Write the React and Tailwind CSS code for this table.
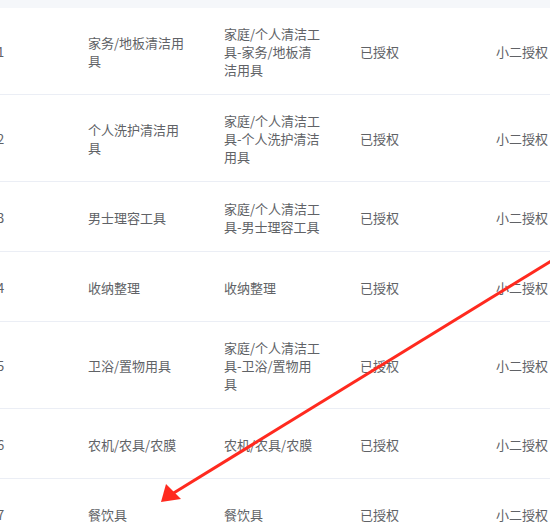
import React from 'react';

const rows = [
  { id: 1, name: '家务/地板清洁用具', path: '家庭/个人清洁工具-家务/地板清洁用具' },
  { id: 2, name: '个人洗护清洁用具', path: '家庭/个人清洁工具-个人洗护清洁用具' },
  { id: 3, name: '男士理容工具', path: '家庭/个人清洁工具-男士理容工具' },
  { id: 4, name: '收纳整理', path: '收纳整理' },
  { id: 5, name: '卫浴/置物用具', path: '家庭/个人清洁工具-卫浴/置物用具' },
  { id: 6, name: '农机/农具/农膜', path: '农机/农具/农膜' },
  { id: 7, name: '餐饮具', path: '餐饮具' },
];

const App = () => {
  return (
    <div
      className="relative w-[550px] h-[522px] overflow-hidden bg-white text-[13px] leading-[18px] text-[#606266]"
      style={{ fontFamily: '"Noto Sans CJK SC", "Noto Sans", sans-serif' }}
    >
      {/* tail of the header row */}
      <div className="h-[8px] bg-[#f5f7fa]" />

      <div className="-ml-[3px]">
        {rows.map(row => (
          <div
            key={row.id}
            className="flex items-center min-h-[70px] pt-[17px] pb-[15px] border-b border-[#ebeef5]"
          >
            <div className="w-[91px] shrink-0">{row.id}</div>
            <div className="w-[136px] shrink-0">
              <div className="w-[99px] break-all">{row.name}</div>
            </div>
            <div className="w-[136px] shrink-0">
              <div className="w-[99px] break-all">{row.path}</div>
            </div>
            <div className="w-[136px] shrink-0">已授权</div>
            <div className="flex-1 whitespace-nowrap">小二授权</div>
          </div>
        ))}
      </div>

      {/* red annotation arrow */}
      <svg
        className="absolute top-0 left-0 pointer-events-none"
        width="550"
        height="522"
        viewBox="0 0 550 522"
      >
        <line x1="556" y1="258" x2="172" y2="494" stroke="#ff2a1f" strokeWidth="3" />
        <polygon points="161,502 166,484 181,499" fill="#ff2a1f" />
      </svg>
    </div>
  );
};

export default App;
